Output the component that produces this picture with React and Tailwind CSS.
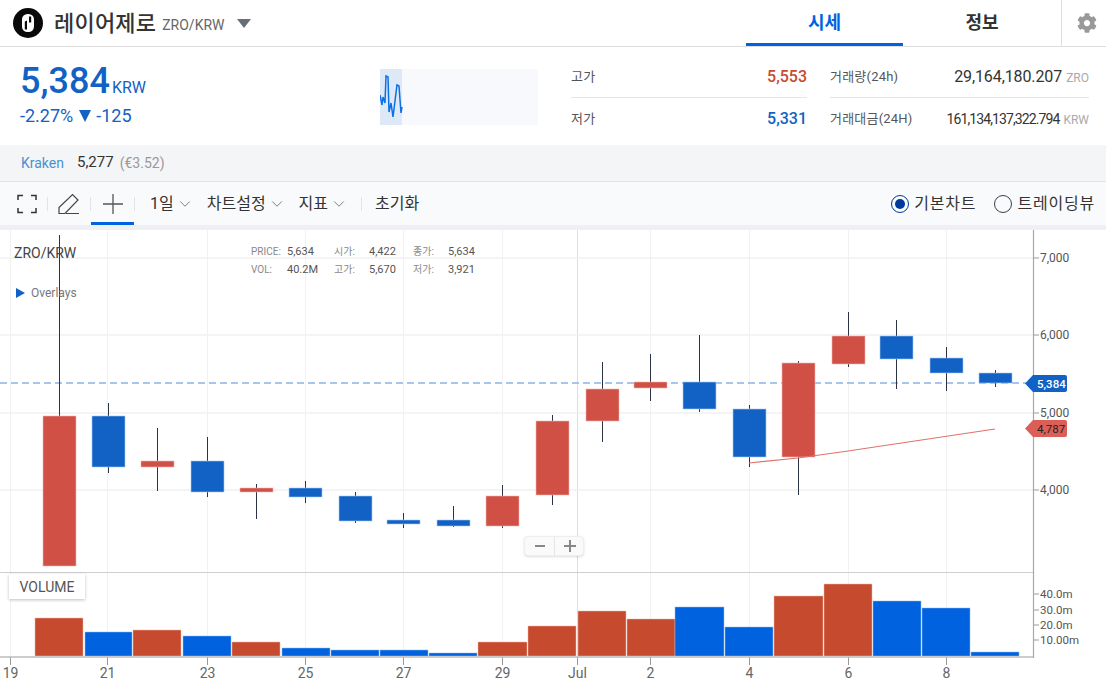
import React from 'react';
import { ChevronDown } from 'lucide-react';
import { FaCog } from 'react-icons/fa';

const RED = '#d15046';
const BLUE = '#1261c4';

const CANDLES = [
  { x: 59, c: RED, top: 416, bottom: 566, hi: 235, lo: 416 },
  { x: 108, c: BLUE, top: 416, bottom: 467, hi: 403, lo: 473 },
  { x: 157, c: RED, top: 461, bottom: 467, hi: 428, lo: 491 },
  { x: 207, c: BLUE, top: 461, bottom: 492, hi: 437, lo: 497 },
  { x: 256, c: RED, top: 488, bottom: 492, hi: 484, lo: 519 },
  { x: 305, c: BLUE, top: 488, bottom: 497, hi: 481, lo: 503 },
  { x: 355, c: BLUE, top: 496, bottom: 521, hi: 492, lo: 523 },
  { x: 403, c: BLUE, top: 520, bottom: 524, hi: 513, lo: 528 },
  { x: 453, c: BLUE, top: 520, bottom: 526, hi: 506, lo: 527 },
  { x: 502, c: RED, top: 496, bottom: 526, hi: 485, lo: 528 },
  { x: 552, c: RED, top: 421, bottom: 495, hi: 415, lo: 505 },
  { x: 602, c: RED, top: 389, bottom: 421, hi: 362, lo: 442 },
  { x: 650, c: RED, top: 382, bottom: 388, hi: 354, lo: 401 },
  { x: 699, c: BLUE, top: 382, bottom: 409, hi: 335, lo: 412 },
  { x: 749, c: BLUE, top: 409, bottom: 457, hi: 405, lo: 467 },
  { x: 798, c: RED, top: 363, bottom: 457, hi: 361, lo: 495 },
  { x: 848, c: RED, top: 336, bottom: 364, hi: 312, lo: 367 },
  { x: 896, c: BLUE, top: 336, bottom: 359, hi: 320, lo: 389 },
  { x: 946, c: BLUE, top: 358, bottom: 373, hi: 347, lo: 391 },
  { x: 995, c: BLUE, top: 373, bottom: 383, hi: 370, lo: 387 },
];

const VOLUMES = [
  [35, 83, 618, 'r'], [85, 132, 632, 'b'], [133, 181, 630, 'r'], [183, 231, 636, 'b'],
  [232, 280, 642, 'r'], [282, 330, 648, 'b'], [331, 379, 650, 'b'], [380, 428, 650, 'b'],
  [429, 477, 653, 'b'], [478, 527, 642, 'r'], [528, 576, 626, 'r'], [578, 626, 611, 'r'],
  [627, 675, 619, 'r'], [675, 724, 607, 'b'], [725, 773, 627, 'b'], [774, 823, 596, 'r'],
  [824, 872, 584, 'r'], [873, 921, 601, 'b'], [922, 970, 608, 'b'], [971, 1019, 652, 'b'],
];

const X_TICKS = [
  [10, '19'], [107, '21'], [207, '23'], [305, '25'], [403, '27'], [502, '29'],
  [577, 'Jul'], [650, '2'], [749, '4'], [848, '6'], [946, '8'],
];

const PRICE_TICKS = [[258, '7,000'], [335, '6,000'], [413, '5,000'], [490, '4,000']];
const VOL_TICKS = [[594, '40.0m'], [610, '30.0m'], [625, '20.0m'], [640, '10.00m']];

const LEGEND = [
  ['PRICE:', '5,634', '시가:', '4,422', '종가:', '5,634'],
  ['VOL:', '40.2M', '고가:', '5,670', '저가:', '3,921'],
];

function Logo() {
  return (
    <svg width="30" height="30" viewBox="0 0 30 30" className="shrink-0">
      <circle cx="15" cy="15" r="15" fill="#0a0a0a" />
      <rect x="9" y="6" width="12" height="18" rx="5.500" fill="#fff" />
      <path d="M16 8.500h2.200v6H16zM11.800 15.500H14v6h-2.200zM11.800 13.500l2.200-1v4l-2.200-1z" fill="#0a0a0a" />
    </svg>
  );
}

function Sparkline() {
  return (
    <div className="relative ml-[255px] h-14 w-[158px] bg-[#f8f9fc]">
      <div className="h-14 w-[22px] bg-[#dde9f6]" />
      <svg width="24" height="56" viewBox="380 69 24 56" className="absolute left-0 top-0">
        <polyline
          points="380,95 382,105 383,97 385,103 386,76 388,77 389,112 391,103 393,117 397,85 399,86 401,113 402,107"
          fill="none"
          stroke="#0d6fe8"
          strokeWidth="1.5"
        />
      </svg>
    </div>
  );
}

function Stat({ label, value, valueClass, unit, rowClass }) {
  return (
    <div className={`flex h-[41px] items-center justify-between ${rowClass}`}>
      <span className="text-[13px] tracking-[0.2px] text-[#555]">{label}</span>
      <span className="flex items-baseline gap-1">
        <span className={valueClass}>{value}</span>
        {unit && <span className="text-xs text-[#aaa]">{unit}</span>}
      </span>
    </div>
  );
}

function Stats() {
  return (
    <div className="ml-[33px] flex gap-[23px] pt-[10px]">
      <div className="w-[236px]">
        <Stat label="고가" value="5,553" valueClass="text-base font-medium text-[#c84a31]" rowClass="border-b border-[#e5e5e5]" />
        <Stat label="저가" value="5,331" valueClass="text-base font-medium text-[#1261c4]" />
      </div>
      <div className="w-[259px]">
        <Stat label="거래량(24h)" value="29,164,180.207" unit="ZRO" valueClass="text-base tracking-[-0.1px] text-[#333]" rowClass="border-b border-[#e5e5e5]" />
        <Stat label="거래대금(24H)" value="161,134,137,322.794" unit="KRW" valueClass="text-sm tracking-[-0.9px] text-[#333]" />
      </div>
    </div>
  );
}

function Divider() {
  return <span className="h-[14px] w-px bg-[#e2e4e8]" />;
}

function Menu({ label, className }) {
  return (
    <button className={`flex items-center gap-[5px] text-base text-[#333] ${className}`}>
      {label}
      <ChevronDown size={18} strokeWidth={1} className="-mx-[3px] text-[#555]" />
    </button>
  );
}

function Radio({ label, checked }) {
  return (
    <label className="flex items-center gap-[5px] text-base tracking-[0.8px] text-[#333]">
      <span className={`flex size-[18px] items-center justify-center rounded-full border-[1.5px] ${checked ? 'border-[#003a9b]' : 'border-[#3a3f48]'}`}>
        {checked && <span className="size-[10px] rounded-full bg-[#003a9b]" />}
      </span>
      {label}
    </label>
  );
}

function Toolbar() {
  return (
    <div className="flex h-[43px] items-center bg-[#f9fafc]">
      <div className="flex w-[47px] justify-center pl-[7px]">
        <svg width="20" height="20" viewBox="0 0 20 20" fill="none" stroke="#333" strokeWidth="1.5">
          <path d="M1 6V1.500h5M14 1.500h5V6M19 14v4.500h-5M6 18.500H1V14" />
        </svg>
      </div>
      <Divider />
      <div className="flex w-[42px] justify-center">
        <svg width="22" height="22" viewBox="0 0 22 22" fill="none" stroke="#444" strokeWidth="1.2">
          <path d="M1 20.500v-6L14.500 1.500 20 7 7 20.500zM8 20.500h13" />
        </svg>
      </div>
      <Divider />
      <div className="flex h-[43px] w-[43px] items-center justify-center border-b-[3px] border-[#0062df] pt-[3px]">
        <svg width="20" height="20" viewBox="0 0 20 20" stroke="#555" strokeWidth="1.3">
          <path d="M0 10h20M10 0v20" />
        </svg>
      </div>
      <Divider />
      <Menu label="1일" className="ml-[15px]" />
      <Menu label="차트설정" className="ml-4" />
      <Menu label="지표" className="ml-4" />
      <span className="ml-4 flex"><Divider /></span>
      <button className="ml-[13px] text-base text-[#333]">초기화</button>
      <div className="ml-auto flex gap-[18px] pr-[11px]">
        <Radio label="기본차트" checked />
        <Radio label="트레이딩뷰" />
      </div>
    </div>
  );
}

function PriceTag({ y, label, fill, text, weight }) {
  return (
    <g>
      <path d={`M1025 ${y} 1033 ${y - 8.500}H1065a2 2 0 0 1 2 2V${y + 6.500}a2 2 0 0 1-2 2H1033z`} fill={fill} />
      <text x="1037" y={y + 4} fontSize="11.500" fontWeight={weight} fill={text}>{label}</text>
    </g>
  );
}

function ChartDrawing() {
  return (
    <svg viewBox="0 230 1106 456" className="block h-full w-full">
      {/* grid */}
      {X_TICKS.map(([x, label]) => (
        <g key={label}>
          <path d={`M${x + 0.5} 230V657`} stroke={label === 'Jul' ? '#dedede' : '#f1f1f1'} strokeWidth="1" />
          <path d={`M${x + 0.5} 657V665`} stroke="#999" />
          <text x={x + 0.5} y="678" fontSize="14" fill="#666" textAnchor="middle">{label}</text>
        </g>
      ))}
      {PRICE_TICKS.map(([y, label]) => (
        <g key={label}>
          <path d={`M0 ${y}H1033`} stroke="#f0f0f0" strokeWidth="1.5" />
          <path d={`M1033 ${y}H1039`} stroke="#999" />
          <text x="1040" y={y + 4} fontSize="12" fill="#555">{label}</text>
        </g>
      ))}

      {/* last price */}
      <path d="M0 383H1026" stroke="#8ab4e8" strokeWidth="1.5" strokeDasharray="7 4" />

      {/* candles */}
      {CANDLES.map((k) => (
        <g key={k.x}>
          <path d={`M${k.x + 0.5} ${k.hi}V${k.lo}`} stroke="#2a3444" strokeWidth="1" />
          <rect
            x={k.x - 16}
            y={k.top}
            width="33"
            height={k.bottom - k.top}
            fill={k.c}
            stroke={k.c === RED ? '#f0b5b0' : '#a9c8f0'}
            strokeWidth="0.6"
          />
        </g>
      ))}

      {/* trend line */}
      <polyline points="749,463 798,458 848,451 995,429" fill="none" stroke="#e2716a" strokeWidth="1.2" />

      {/* volume pane */}
      <path d="M0 572.500H1033" stroke="#cfcfcf" strokeWidth="1.2" />
      {VOLUMES.map(([a, b, top, side]) => (
        <rect
          key={a}
          x={a}
          y={top}
          width={b - a}
          height={656 - top}
          fill={side === 'r' ? '#c64a2e' : '#0062df'}
          stroke={side === 'r' ? '#eeb8a8' : '#8fbcf2'}
          strokeWidth="0.5"
        />
      ))}
      <path d="M0 657H1033" stroke="#bdbdbd" strokeWidth="1.5" />
      {VOL_TICKS.map(([y, label]) => (
        <g key={label}>
          <path d={`M1033 ${y}H1039`} stroke="#999" />
          <text x="1040" y={y + 4} fontSize="11.500" fill="#555">{label}</text>
        </g>
      ))}

      {/* right axis */}
      <path d="M1033.500 230V658" stroke="#a8a8a8" strokeWidth="1.2" />
      <PriceTag y={383.500} label="5,384" fill="#1261c4" text="#fff" weight="500" />
      <PriceTag y={428.500} label="4,787" fill="#dc5f57" text="#222" weight="400" />
    </svg>
  );
}

function Chart() {
  return (
    <div className="relative min-h-0 flex-1 bg-white">
      <ChartDrawing />

      {/* overlays on the chart */}
      <div className="absolute left-[14px] top-[14px] text-sm leading-[18px] text-[#444]">ZRO/KRW</div>
      <div className="absolute left-[16px] top-[56px] flex items-center gap-[6px] text-xs leading-[14px] text-[#777]">
        <span className="h-0 w-0 border-y-[5px] border-l-[9px] border-y-transparent border-l-[#1261c4]" />
        Overlays
      </div>
      <div className="absolute left-[251px] top-[15px] grid grid-cols-[36px_47px_35px_44px_35px_auto] gap-y-1 text-[11px] leading-[14px] text-[#555]">
        {LEGEND.flat().map((t, i) => (
          <span key={i} className={i % 2 === 0 ? 'text-[10px] text-[#888]' : ''}>{t}</span>
        ))}
      </div>
      <div className="absolute left-[524px] top-[306px] flex h-[20px] w-[60px] items-center rounded-sm border border-[#eee] bg-[#fafafa] shadow-sm">
        <span className="flex w-[30px] justify-center border-r border-[#e5e5e5] py-[4px]">
          <span className="my-[4px] h-[2px] w-[10px] bg-[#888]" />
        </span>
        <svg width="12" height="12" viewBox="0 0 12 12" className="ml-[9px]" stroke="#888" strokeWidth="2">
          <path d="M0 6h12M6 0v12" />
        </svg>
      </div>
      <div className="absolute left-[9px] top-[344px] flex h-[25px] w-[76px] items-center justify-center bg-white text-sm text-[#555] shadow-[0_1px_3px_rgba(0,0,0,0.25)]">
        VOLUME
      </div>
    </div>
  );
}

export default function App() {
  return (
    <div className="flex h-screen w-full flex-col overflow-hidden bg-white font-[Roboto,'Noto_Sans_CJK_KR',sans-serif]">
      {/* Header */}
      <header className="flex h-[47px] shrink-0 items-center border-b border-[#dedede]">
        <div className="ml-[13px] flex items-center">
          <Logo />
          <span className="ml-[11px] text-[22px] font-medium tracking-[0.2px] text-[#333]">레이어제로</span>
          <span className="ml-[6px] mt-[3px] text-sm text-[#666]">ZRO/KRW</span>
          <span className="ml-[13px] h-0 w-0 border-x-[7.500px] border-t-[9px] border-x-transparent border-t-[#666e7a]" />
        </div>
        <nav className="ml-auto flex h-full">
          <a className="flex w-[157px] items-center justify-center border-b-[3px] border-[#0062df] pt-[2px] text-lg font-bold text-[#0062df]">시세</a>
          <a className="flex w-[158px] items-center justify-center text-lg font-bold text-[#333]">정보</a>
          <div className="flex w-[45px] items-center justify-center border-l border-[#dedede]">
            <FaCog size={20} className="ml-[5px] text-[#999]" />
          </div>
        </nav>
      </header>

      {/* Price */}
      <section className="flex h-[98px] shrink-0 items-start">
        <div className="w-[125px] shrink-0 pl-5 pt-[12px]">
          <div className="flex items-baseline whitespace-nowrap text-[#1261c4]">
            <span className="text-4xl font-medium leading-[44px]">5,384</span>
            <span className="ml-[2px] text-base">KRW</span>
          </div>
          <div className="mt-[3px] flex items-center whitespace-nowrap text-lg leading-5 text-[#1261c4]">
            -2.27%
            <span className="ml-[6px] h-0 w-0 border-x-[6px] border-t-[12px] border-x-transparent border-t-[#1261c4]" />
            <span className="ml-[5px]">-125</span>
          </div>
        </div>
        <div className="pt-[22px]"><Sparkline /></div>
        <Stats />
      </section>

      {/* Reference exchange */}
      <div className="flex h-[37px] shrink-0 items-center border-b border-[#dfe2e6] bg-[#f4f5f7] pl-[21px] text-sm">
        <span className="text-[#4a90d0]">Kraken</span>
        <span className="ml-[13px] text-[15px] text-[#333]">5,277</span>
        <span className="ml-[6px] text-[#999]">(€3.52)</span>
      </div>

      <Toolbar />
      <div className="h-[5px] shrink-0 bg-[#eef0f4]" />
      <Chart />
    </div>
  );
}
